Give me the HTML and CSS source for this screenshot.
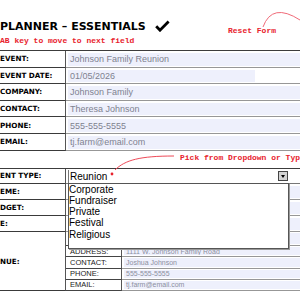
FILE: index.html
```html
<!DOCTYPE html>
<html lang="en">
<head>
<meta charset="utf-8">
<title>Event Planner – Essentials</title>
<link rel="stylesheet" href="styles.css">
</head>
<body>
<main class="sheet">
  <header class="top">
    <div class="titles">
      <h1 class="title"><span class="cut"><span>EVENT&nbsp;</span></span><span class="title-text">PLANNER – ESSENTIALS</span><svg class="check" viewBox="0 0 16 12" width="16" height="12"><path d="M2.2 6.2 L6 10.2 L14.6 1.6"/></svg></h1>
      <p class="hint"><span class="cut"><span>T</span></span><span>AB key to move to next field</span></p>
    </div>
    <div class="reset">Reset Form</div>
    <svg class="reset-arc" viewBox="0 0 40 30" width="40" height="30"><path d="M3 27 Q12 2 40 20"/></svg>
  </header>

  <section class="form form-main">
    <div class="row"><div class="label">EVENT:</div><div class="value"><div class="field">Johnson Family Reunion</div></div></div>
    <div class="row"><div class="label">EVENT DATE:</div><div class="value"><div class="field field-short">01/05/2026</div></div></div>
    <div class="row"><div class="label">COMPANY:</div><div class="value"><div class="field">Johnson Family</div></div></div>
    <div class="row"><div class="label">CONTACT:</div><div class="value"><div class="field">Theresa Johnson</div></div></div>
    <div class="row"><div class="label">PHONE:</div><div class="value"><div class="field">555-555-5555</div></div></div>
    <div class="row"><div class="label">EMAIL:</div><div class="value"><div class="field">tj.farm@email.com</div></div></div>
  </section>

  <div class="note">
    <svg class="note-arrow" viewBox="0 0 72 28" width="72" height="28"><path d="M7 20 C17 10 32 6 66 6"/><circle cx="4" cy="24" r="1.4"/></svg>
    <span class="note-text">Pick from Dropdown or Type</span>
  </div>

  <section class="form form-details">
    <div class="row row-type"><div class="label"><span class="cut"><span>EV</span></span><span>ENT TYPE:</span></div><div class="value value-combo"><div class="combo"><span class="combo-text">Reunion</span><span class="combo-btn"></span></div></div></div>
    <div class="row row-theme"><div class="label"><span class="cut"><span>TH</span></span><span>EME:</span></div><div class="value"><div class="field"></div></div></div>
    <div class="row row-budget"><div class="label"><span class="cut"><span>BU</span></span><span>DGET:</span></div><div class="value"><div class="field"></div></div></div>
    <div class="row row-date"><div class="label"><span class="cut"><span>DAT</span></span><span>E:</span></div><div class="value"><div class="field"></div></div></div>
    <div class="venue">
      <div class="label venue-label"><span class="cut"><span>VE</span></span><span>NUE:</span></div>
      <div class="subrows">
        <div class="subrow subrow-first"><div class="sublabel">NAME:</div><div class="subvalue"><div class="field"></div></div></div>
        <div class="subrow"><div class="sublabel">ADDRESS:</div><div class="subvalue"><div class="field">1111 W. Johnson Family Road</div></div></div>
        <div class="subrow"><div class="sublabel">CONTACT:</div><div class="subvalue"><div class="field">Joshua Johnson</div></div></div>
        <div class="subrow"><div class="sublabel">PHONE:</div><div class="subvalue"><div class="field">555-555-5555</div></div></div>
        <div class="subrow"><div class="sublabel">EMAIL:</div><div class="subvalue"><div class="field">tj.farm@email.com</div></div></div>
      </div>
    </div>
    <ul class="dropdown">
      <li>Corporate</li>
      <li>Fundraiser</li>
      <li>Private</li>
      <li>Festival</li>
      <li>Religious</li>
    </ul>
  </section>
</main>
</body>
</html>
```

FILE: styles.css
```css
html, body {
  margin: 0;
  padding: 0;
  overflow: hidden;
  background: #ffffff;
}

body {
  width: 300px;
  height: 300px;
  font-family: "Liberation Sans", Arial, sans-serif;
  color: #000;
}

.sheet {
  width: 300px;
}

/* ---------- header ---------- */
.top {
  position: relative;
  display: flex;
  height: 50px;
}

.titles {
  width: 228px;
  flex: none;
  padding-top: 21px;
}

.title {
  margin: 0;
  display: flex;
  align-items: flex-start;
  font-family: "DejaVu Sans", sans-serif;
  font-weight: 700;
  font-size: 11px;
  line-height: 12px;
  white-space: nowrap;
  color: #000;
}

.cut {
  display: flex;
  justify-content: flex-end;
  width: 0;
  min-width: 0;
  flex: none;
  white-space: nowrap;
}

.cut > span {
  flex: none;
}

.check {
  flex: none;
  margin-left: 8px;
  margin-top: -1px;
}

.check path {
  fill: none;
  stroke: #000;
  stroke-width: 2.8;
  stroke-linejoin: miter;
}

.hint {
  margin: 3px 0 0;
  display: flex;
  font-family: "Liberation Mono", "Courier New", monospace;
  font-weight: 700;
  font-size: 8px;
  line-height: 9px;
  white-space: nowrap;
  color: #e8222d;
}

.reset {
  padding-top: 26px;
  font-family: "Liberation Mono", "Courier New", monospace;
  font-weight: 700;
  font-size: 8px;
  line-height: 9px;
  white-space: nowrap;
  color: #e8222d;
}

.reset-arc {
  position: absolute;
  left: 260px;
  top: 0;
}

.reset-arc path {
  fill: none;
  stroke: #f06a78;
  stroke-width: 1;
}

/* ---------- form tables ---------- */
.form {
  position: relative;
  border-top: 1px solid #3c3c3c;
}

.row {
  display: grid;
  grid-template-columns: 66px 1fr;
  height: 16.6px;
}

.label {
  box-sizing: border-box;
  display: flex;
  align-items: center;
  border-right: 1px solid #555;
  border-bottom: 1px solid #3a3a3a;
  font-family: "DejaVu Sans", sans-serif;
  font-weight: 700;
  font-size: 7.2px;
  white-space: nowrap;
  color: #000;
}

.value {
  box-sizing: border-box;
  padding: 2px 0 1px 2px;
  border-bottom: 1px solid #979797;
  min-width: 0;
}

.field {
  box-sizing: border-box;
  height: 100%;
  display: flex;
  align-items: center;
  padding-left: 2px;
  background: #eef0fc;
  font-size: 9px;
  color: #7e8290;
  white-space: nowrap;
  overflow: hidden;
}

.field-short {
  width: 187px;
}

/* ---------- note ---------- */
.note {
  position: relative;
  height: 17px;
  box-sizing: border-box;
  padding: 2.5px 0 0 180px;
  font-family: "Liberation Mono", "Courier New", monospace;
  font-weight: 700;
  font-size: 8px;
  line-height: 9px;
  white-space: nowrap;
  color: #e8222d;
}

.note-arrow {
  position: absolute;
  left: 108px;
  top: -1px;
  z-index: 3;
}

.note-arrow path {
  fill: none;
  stroke: #ee4a58;
  stroke-width: 1;
}

.note-arrow circle {
  fill: #e8222d;
}

/* ---------- details table ---------- */
.row-type { height: 15px; }
.row-theme { height: 16px; }
.row-budget { height: 16.5px; }
.row-date { height: 16px; }

.value-combo {
  padding: 1px 0 0 2px;
  border-bottom: 1px solid #777;
}

.combo {
  box-sizing: border-box;
  width: 221px;
  height: 100%;
  display: flex;
  align-items: center;
  border-left: 1px solid #777;
  background: #fff;
}

.combo-text {
  flex: 1;
  padding-left: 1px;
  font-size: 10px;
  color: #000;
}

.combo-btn {
  box-sizing: border-box;
  width: 10px;
  height: 10px;
  margin-right: 1px;
  display: flex;
  align-items: center;
  justify-content: center;
  background: #d2d2d2;
  border: 1px solid #444;
}

.combo-btn::after {
  content: "";
  border-left: 2.5px solid transparent;
  border-right: 2.5px solid transparent;
  border-top: 3px solid #000;
}

.venue {
  display: grid;
  grid-template-columns: 66px 1fr;
}

.subrows {
  display: flex;
  flex-direction: column;
}

.subrow {
  display: grid;
  grid-template-columns: 56px 1fr;
  height: 11.25px;
}

.subrow-first {
  height: 14px;
}

.sublabel {
  box-sizing: border-box;
  display: flex;
  align-items: center;
  padding-left: 4px;
  border-right: 1px solid #555;
  border-bottom: 1px solid #444;
  font-size: 7.5px;
  color: #222;
  white-space: nowrap;
}

.subvalue {
  box-sizing: border-box;
  padding: 1px 0 1px 2px;
  border-bottom: 1px solid #979797;
  min-width: 0;
}

.subvalue .field {
  font-size: 7px;
  color: #8b8fa0;
}

.dropdown {
  position: absolute;
  left: 68px;
  top: 14px;
  width: 221px;
  height: 66px;
  box-sizing: border-box;
  margin: 0;
  padding: 0;
  list-style: none;
  background: #fff;
  border: 1px solid #555;
  box-shadow: 1px 1px 0 #9a9a9a;
  font-size: 10px;
  line-height: 11.3px;
  color: #000;
  z-index: 2;
}

.dropdown li {
  padding-left: 0;
  white-space: nowrap;
}
```
